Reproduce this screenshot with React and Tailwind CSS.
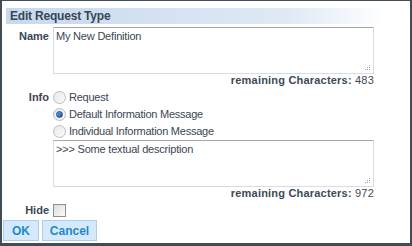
const font = { fontFamily: '"Liberation Sans", Arial, sans-serif' };

const Grip = () => (
  <svg
    className="absolute bottom-[2px] right-[2px]"
    width="7"
    height="7"
    viewBox="0 0 7 7"
  >
    <rect x="5" y="1" width="1" height="1" fill="#9aa3ad" />
    <rect x="3" y="3" width="1" height="1" fill="#9aa3ad" />
    <rect x="5" y="3" width="1" height="1" fill="#9aa3ad" />
    <rect x="1" y="5" width="1" height="1" fill="#9aa3ad" />
    <rect x="3" y="5" width="1" height="1" fill="#9aa3ad" />
    <rect x="5" y="5" width="1" height="1" fill="#9aa3ad" />
  </svg>
);

const TextBox = ({ value }) => (
  <div className="relative h-[47px] w-[321px] border border-[#d6dce3] border-t-[#a8a8a8] bg-white px-[2px] py-[1px] text-[11px] leading-[14px] tracking-[-0.2px] text-[#3a4654]">
    {value}
    <Grip />
  </div>
);

const Remaining = ({ count }) => (
  <div className="w-[321px] text-right text-[11px] leading-[13px] tracking-[0.2px] text-[#3d4a58]">
    <span className="font-bold">remaining Characters:</span> {count}
  </div>
);

const Radio = ({ checked, label }) => (
  <div className="flex h-[17px] items-center gap-[3px]">
    <span className="flex h-[13px] w-[13px] items-center justify-center rounded-full border border-[#b8bcc2] bg-gradient-to-br from-[#e6e8eb] to-[#fafafa]">
      {checked && (
        <span className="h-[7px] w-[7px] rounded-full border border-[#1d4f86] bg-gradient-to-br from-[#6aa8e0] to-[#1a5a9c]" />
      )}
    </span>
    <span className="text-[11px] tracking-[-0.25px] text-[#3a4654]">{label}</span>
  </div>
);

const App = () => {
  return (
    <div
      className="h-[246px] w-[412px] border-x-2 border-t border-b-[3px] border-[#414c57] bg-white"
      style={font}
    >
      <div className="px-[4px] pt-[7px]">
        <div className="h-[16px] bg-gradient-to-r from-[#c6d9ee] via-[#dfe9f5] via-70% to-white to-95% pl-[4px] text-[12px] font-bold leading-[16px] tracking-[-0.2px] text-[#3a4654]">
          Edit Request Type
        </div>

        <div className="mt-[3px] grid grid-cols-[43px_1fr] gap-x-[4px]">
          <div className="pt-[2px] text-right text-[11px] font-bold leading-[14px] text-[#3a4654]">
            Name
          </div>
          <div>
            <TextBox value="My New Definition" />
            <Remaining count={483} />
          </div>

          <div className="pt-[2px] text-right text-[11px] font-bold leading-[14px] text-[#3a4654]">
            <div className="mt-[1px]">Info</div>
          </div>
          <div className="mt-[2px]">
            <Radio label="Request" />
            <Radio checked label="Default Information Message" />
            <Radio label="Individual Information Message" />
            <TextBox value=">>> Some textual description" />
            <Remaining count={972} />
          </div>

          <div className="mt-[2px] flex h-[17px] items-center justify-end text-[11px] font-bold text-[#3a4654]">
            Hide
          </div>
          <div className="mt-[2px] flex h-[17px] items-center">
            <span className="h-[13px] w-[13px] border border-[#8e8f8f] bg-gradient-to-br from-[#dcdcdc] to-[#fbfbfb]" />
          </div>
        </div>
      </div>

      <div className="mt-[1px] flex gap-[3px] pl-[1px]">
        <button className="h-[21px] w-[36px] border border-[#a9d0f0] bg-[#d6e9f8] text-[12px] font-bold text-[#1e8acb]">
          OK
        </button>
        <button className="h-[21px] w-[55px] border border-[#a9d0f0] bg-[#d6e9f8] text-[12px] font-bold text-[#1e8acb]">
          Cancel
        </button>
      </div>
    </div>
  );
};

export default App;
